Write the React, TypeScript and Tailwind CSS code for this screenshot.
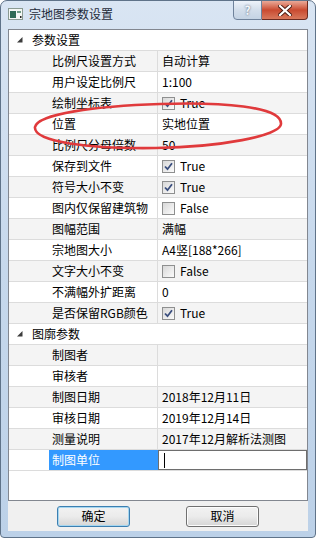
import React from "react";

type Item = { name: string; value?: string; check?: boolean };

const group1: Item[] = [
  { name: "比例尺设置方式", value: "自动计算" },
  { name: "用户设定比例尺", value: "1:100" },
  { name: "绘制坐标表", check: true },
  { name: "位置", value: "实地位置" },
  { name: "比例尺分母倍数", value: "50" },
  { name: "保存到文件", check: true },
  { name: "符号大小不变", check: true },
  { name: "图内仅保留建筑物", check: false },
  { name: "图幅范围", value: "满幅" },
  { name: "宗地图大小", value: "A4竖[188*266]" },
  { name: "文字大小不变", check: false },
  { name: "不满幅外扩距离", value: "0" },
  { name: "是否保留RGB颜色", check: true },
];

const group2: Item[] = [
  { name: "制图者", value: "" },
  { name: "审核者", value: "" },
  { name: "制图日期", value: "2018年12月11日" },
  { name: "审核日期", value: "2019年12月14日" },
  { name: "测量说明", value: "2017年12月解析法测图" },
];

function CheckBox({ checked }: { checked: boolean }) {
  return (
    <span className="w-[13px] h-[13px] border border-[#8e8f8f] bg-gradient-to-br from-[#d8d8d8] to-[#fbfbfb] flex items-center justify-center">
      {checked && (
        <svg width="9" height="9" viewBox="0 0 9 9">
          <path d="M1 4.5 L3.5 7.2 L8 1.2" fill="none" stroke="#3b4f7e" strokeWidth="1.8" />
        </svg>
      )}
    </span>
  );
}

function Category({ title }: { title: string }) {
  return (
    <div className="h-[21px] flex items-center border-b border-[#dcdcdc] bg-white">
      <svg width="6" height="6" viewBox="0 0 6 6" className="ml-[8px]">
        <polygon points="5.5,0 5.5,5.5 0,5.5" fill="#3c3c3c" />
      </svg>
      <span className="ml-[9px]">{title}</span>
    </div>
  );
}

function Row({ item, index }: { item: Item; index: number }) {
  return (
    <div className={`h-[21px] flex border-b border-[#dcdcdc] ${index % 2 === 0 ? "bg-[#f4f4f4]" : "bg-white"}`}>
      <div className="w-[40px]" />
      <div className="w-[109px] border-r border-[#dcdcdc] pl-[3px] flex items-center whitespace-nowrap overflow-hidden">
        {item.name}
      </div>
      <div className="flex-1 pl-[4px] flex items-center whitespace-nowrap">
        {item.check !== undefined ? (
          <>
            <CheckBox checked={item.check} />
            <span className="ml-[5px]">{item.check ? "True" : "False"}</span>
          </>
        ) : (
          item.value
        )}
      </div>
    </div>
  );
}

export default function App() {
  return (
    <div className="w-[316px] h-[538px] relative text-[12px] text-black font-['Noto_Sans_CJK_SC',sans-serif]">
      <div className="w-full h-full flex flex-col border border-[#5f7389] rounded-t-[7px] rounded-b-[4px] bg-gradient-to-b from-[#d9e5f3] via-[#c6d8ec] to-[#bcd1e8] overflow-hidden">
        {/* title bar */}
        <div className="h-[28px] flex items-start">
          <div className="flex items-center h-[26px] pl-[7px]">
            <svg width="15" height="12" viewBox="0 0 15 12">
              <rect x="0.5" y="0.5" width="14" height="11" fill="#f4f7f4" stroke="#8a9a92" />
              <rect x="2" y="3" width="6" height="7" fill="#2f6b55" />
              <rect x="9" y="3" width="4" height="2" fill="#6e9b86" />
              <rect x="12" y="8" width="1.5" height="2" fill="#222" />
            </svg>
            <span className="ml-[6px] text-[#1e2b3a]">宗地图参数设置</span>
          </div>
          <div className="ml-auto mr-[7px] -mt-px flex">
            <div className="w-[29px] h-[20px] rounded-bl-[4px] border border-[#6f829b] bg-gradient-to-b from-[#eef3fa] via-[#d3deeb] to-[#c4d3e4] flex items-center justify-center text-[12px] font-bold text-[#f4f7fb] [text-shadow:0_0_2px_#44546a]">
              ?
            </div>
            <div className="w-[46px] h-[20px] rounded-br-[4px] border border-l-0 border-[#6b2a20] bg-gradient-to-b from-[#e9a998] via-[#c94a30] to-[#d8785c] flex items-center justify-center">
              <svg width="14" height="11" viewBox="0 0 14 11">
                <path d="M2 1 L12 10 M12 1 L2 10" stroke="#4a1b12" strokeWidth="4" strokeLinecap="square" />
                <path d="M2 1 L12 10 M12 1 L2 10" stroke="#ffffff" strokeWidth="2.2" strokeLinecap="square" />
              </svg>
            </div>
          </div>
        </div>

        {/* client area */}
        <div className="mx-[7px] h-[502px] bg-[#f0f0f0] flex flex-col">
          <div className="h-[472px] border border-[#828790] bg-white flex flex-col">
            <Category title="参数设置" />
            {group1.map((it, i) => (
              <Row key={it.name} item={it} index={i} />
            ))}
            <Category title="图廓参数" />
            {group2.map((it, i) => (
              <Row key={it.name} item={it} index={i} />
            ))}
            <div className="h-[21px] flex border-b border-[#dcdcdc] bg-white">
              <div className="w-[40px]" />
              <div className="w-[109px] bg-[#3399ff] text-white pl-[3px] flex items-center">制图单位</div>
              <div className="flex-1 border border-[#6e6e6e] bg-white flex items-center pl-[5px]">
                <span className="w-px h-[15px] bg-black" />
              </div>
            </div>
          </div>
          <div className="flex-1 flex items-center pl-[49px] gap-[56px]">
            <button className="w-[73px] h-[21px] rounded-[3px] border border-[#3c7fb1] bg-gradient-to-b from-[#f2f2f2] via-[#ebebeb] to-[#d5d5d5] shadow-[inset_0_0_0_1px_#a5d6f0] text-black">
              确定
            </button>
            <button className="w-[73px] h-[21px] rounded-[3px] border border-[#707070] bg-gradient-to-b from-[#f2f2f2] via-[#ebebeb] to-[#d5d5d5] shadow-[inset_0_0_0_1px_#fcfcfc] text-black">
              取消
            </button>
          </div>
        </div>
      </div>

      {/* red annotation */}
      <svg className="absolute top-0 left-0 pointer-events-none" width="316" height="538">
        <path
          d="M35 127 C38 114 95 106 160 104 C220 102 282 106 281 124 C280 136 220 147 156 148 C90 149 33 142 35 127 Z"
          fill="none"
          stroke="#e03a3c"
          strokeWidth="2.6"
        />
      </svg>
    </div>
  );
}
